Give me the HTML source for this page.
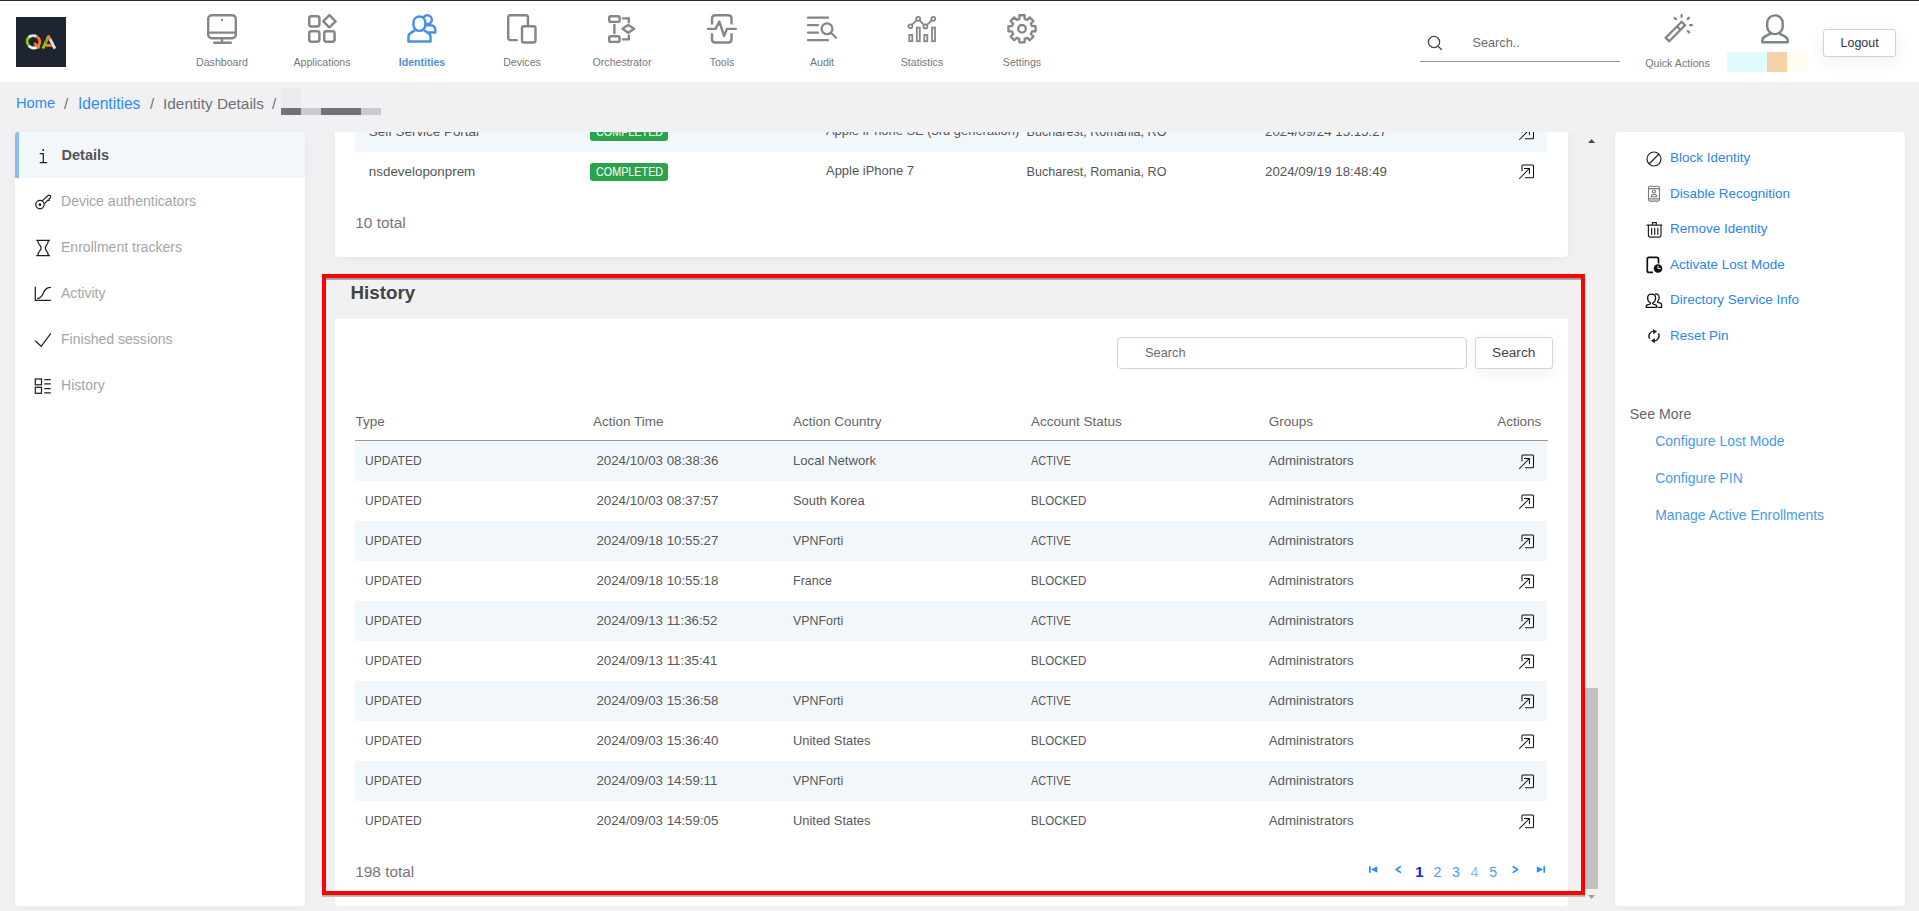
<!DOCTYPE html>
<html><head><meta charset="utf-8"><style>*{box-sizing:border-box;margin:0;padding:0}
html,body{width:1919px;height:911px;overflow:hidden;background:#f1f1f3;font-family:"Liberation Sans",sans-serif;position:relative}
.a{position:absolute}
svg.a{overflow:visible}
.t{position:absolute;line-height:1;white-space:nowrap}
</style></head><body>
<div class="a" style="left:0px;top:0px;width:1919px;height:82px;background:#fff"></div>
<div class="a" style="left:0px;top:0px;width:1919px;height:1px;background:#2a2a2a"></div>
<div class="a" style="left:16px;top:17px;width:50px;height:50px;background:#1f2530"></div>
<svg class="a" style="left:16px;top:17px;" width="50" height="50" viewBox="0 0 50 50"><g fill="none" stroke-width="2.9"><path d="M12.6,20.5 A6,6 0 0 1 16,18.8" stroke="#e6e6e6"/><path d="M16,18.8 A6,6 0 0 1 20.5,19.5" stroke="#e6e6e6"/><path d="M20.5,19.5 A6,6 0 0 1 22.8,28.2" stroke="#f07c28"/><path d="M22.8,28.2 A6,6 0 0 1 12.8,28.5" stroke="#f4f4f4"/><path d="M12.8,28.5 A6,6 0 0 1 12.6,20.5" stroke="#86cc14"/><path d="M18.2,26 L23.4,31.2" stroke="#f07c28"/><path d="M26.9,31.5 L29.8,25.4" stroke="#86cc14"/><path d="M29.8,25.4 L31.4,22" stroke="#7aa820"/><path d="M31.4,22 L32.6,19.5" stroke="#e6e6e6"/><path d="M31.2,22 L32.6,19.4 L34.4,22.5" stroke="#f07c28" stroke-linejoin="round"/><path d="M34.2,22.4 L38.9,31.6" stroke="#e6e6e6"/><path d="M30,28.4 H36" stroke="#f07c28"/></g></svg>
<svg class="a" style="left:207px;top:14px;overflow:visible" width="30" height="30" viewBox="0 0 30 30"><g fill="none" stroke="#868686" stroke-width="2.4" stroke-linecap="round"><rect x="1.2" y="1.2" width="27.6" height="23" rx="3.5"/><path d="M1.5,18.6 H28.5"/><path d="M15,24.5 V28.5"/><path d="M7.2,28.7 H23.8"/></g><circle cx="15" cy="6" r="1.2" fill="#868686"/></svg>
<div class="t" style="left:122px;width:200px;text-align:center;top:57.43px;font-size:10.6px;color:#777;font-weight:normal;">Dashboard</div>
<svg class="a" style="left:307px;top:14px;overflow:visible" width="30" height="30" viewBox="0 0 30 30"><g fill="none" stroke="#868686" stroke-width="2.5"><rect x="2.2" y="2.2" width="10.2" height="10.3" rx="2.2"/><rect x="2.2" y="17.2" width="10.2" height="10.5" rx="2.2"/><rect x="17.2" y="17.2" width="10.4" height="10.5" rx="2.2"/><path d="M22.4,1.2 L28.6,7.3 L22.4,13.4 L16.2,7.3Z" stroke-linejoin="round"/></g></svg>
<div class="t" style="left:222px;width:200px;text-align:center;top:57.43px;font-size:10.6px;color:#777;font-weight:normal;">Applications</div>
<svg class="a" style="left:407px;top:14px;overflow:visible" width="30" height="30" viewBox="0 0 30 30"><g stroke="#4a90e2" stroke-width="2.45" stroke-linejoin="round"><circle cx="20.3" cy="5.75" r="4.5" fill="none"/><path d="M18.5,11.3 H23.2 Q28.35,11.6 28.35,16.2 V18.5 H21" fill="none"/><path d="M8,16.4 L4.6,18.4 Q1.45,20.2 1.45,23 V27.45 H23.55 V23 Q23.55,20.2 20.4,18.4 L17,16.4" fill="#fff"/><rect x="6.45" y="2.45" width="11.9" height="14.4" rx="5.95" ry="6.2" fill="#fff"/></g></svg>
<div class="t" style="left:322px;width:200px;text-align:center;top:57.43px;font-size:10.6px;color:#4a90e2;font-weight:bold;">Identities</div>
<svg class="a" style="left:507px;top:14px;overflow:visible" width="30" height="30" viewBox="0 0 30 30"><g fill="none" stroke="#80878b" stroke-width="2.4" stroke-linecap="round"><path d="M9.8,26.1 H3.5 Q1.2,26.1 1.2,23.8 V3.5 Q1.2,1.2 3.5,1.2 H18.7 Q21,1.2 21,3.5 V11"/><rect x="15" y="12.2" width="13.5" height="16.3" rx="2"/></g></svg>
<div class="t" style="left:422px;width:200px;text-align:center;top:57.43px;font-size:10.6px;color:#777;font-weight:normal;">Devices</div>
<svg class="a" style="left:607px;top:14px;overflow:visible" width="30" height="30" viewBox="0 0 30 30"><g fill="none" stroke="#868686" stroke-width="2.4" stroke-linecap="round"><rect x="2.2" y="2.2" width="10.4" height="5.7" rx="1.6"/><rect x="2.2" y="22.2" width="10.4" height="5.7" rx="1.6"/><path d="M7.4,11 V19"/><path d="M21.3,10.9 L27.2,14.8 L21.3,18.7 L15.4,14.8Z" stroke-linejoin="round"/><path d="M16,4.4 H21.8 V8.2"/><path d="M21.8,21.6 V25.4 H16"/></g></svg>
<div class="t" style="left:522px;width:200px;text-align:center;top:57.43px;font-size:10.6px;color:#777;font-weight:normal;">Orchestrator</div>
<svg class="a" style="left:707px;top:14px;overflow:visible" width="30" height="30" viewBox="0 0 30 30"><g fill="none" stroke="#868686" stroke-width="2.4"><path d="M5,10.5 V4.5 Q5,1.2 8.3,1.2 H21.2 Q24.5,1.2 24.5,4.5 V10.5"/><path d="M5,19.3 V25.2 Q5,28.5 8.3,28.5 H21.2 Q24.5,28.5 24.5,25.2 V19.3"/><path d="M0,14.9 H8.6 L12.3,7.6 L17.1,21.8 L20,14.9 H29.8" stroke-linejoin="round"/></g></svg>
<div class="t" style="left:622px;width:200px;text-align:center;top:57.43px;font-size:10.6px;color:#777;font-weight:normal;">Tools</div>
<svg class="a" style="left:807px;top:14px;overflow:visible" width="30" height="30" viewBox="0 0 30 30"><g fill="none" stroke="#868686" stroke-width="2.3" stroke-linecap="round"><path d="M1,3.7 H21 M1,11.2 H11 M1,18.7 H11 M1,26.2 H21"/><circle cx="20" cy="14.8" r="5.4"/><path d="M24.4,19.2 L29,23.8"/></g></svg>
<div class="t" style="left:722px;width:200px;text-align:center;top:57.43px;font-size:10.6px;color:#777;font-weight:normal;">Audit</div>
<svg class="a" style="left:907px;top:14px;overflow:visible" width="30" height="30" viewBox="0 0 30 30"><g fill="none" stroke="#868686" stroke-width="1.8"><rect x="2.3" y="21" width="3" height="6.2"/><rect x="9.8" y="13.6" width="3" height="13.6"/><rect x="17.3" y="21" width="3" height="6.2"/><rect x="25" y="13.6" width="3" height="13.6"/><path d="M4.7,10.9 L9.9,6.1 M12.5,6.1 L17.1,11.1 M19.7,11.1 L24.9,6.1"/><circle cx="3.4" cy="12.3" r="2"/><circle cx="11.2" cy="4.8" r="2"/><circle cx="18.4" cy="12.5" r="2"/><circle cx="26.3" cy="4.8" r="2"/></g></svg>
<div class="t" style="left:822px;width:200px;text-align:center;top:57.43px;font-size:10.6px;color:#777;font-weight:normal;">Statistics</div>
<svg class="a" style="left:1007px;top:14px;overflow:visible" width="30" height="30" viewBox="0 0 30 30"><g fill="none" stroke="#868686" stroke-width="2.3" stroke-linejoin="round"><path d="M12.40,4.83 L12.40,1.25 L17.60,1.25 L17.60,4.83 L20.21,5.91 L22.74,3.38 L26.42,7.06 L23.89,9.59 L24.97,12.20 L28.55,12.20 L28.55,17.40 L24.97,17.40 L23.89,20.01 L26.42,22.54 L22.74,26.22 L20.21,23.69 L17.60,24.77 L17.60,28.35 L12.40,28.35 L12.40,24.77 L9.79,23.69 L7.26,26.22 L3.58,22.54 L6.11,20.01 L5.03,17.40 L1.45,17.40 L1.45,12.20 L5.03,12.20 L6.11,9.59 L3.58,7.06 L7.26,3.38 L9.79,5.91Z"/><circle cx="15" cy="14.8" r="3.8"/></g></svg>
<div class="t" style="left:922px;width:200px;text-align:center;top:57.43px;font-size:10.6px;color:#777;font-weight:normal;">Settings</div>
<svg class="a" style="left:1420px;top:30px;" width="30" height="30" viewBox="0 0 30 30"><g fill="none" stroke="#444" stroke-width="1.3"><circle cx="14" cy="12" r="5.6"/><path d="M18,16.2 L21.8,19.8"/></g></svg>
<div class="t" style="left:1472.5px;top:37.25px;font-size:12.7px;color:#6d6d6d;font-weight:normal;">Search..</div>
<div class="a" style="left:1420px;top:61px;width:200px;height:1.3px;background:#8d9c9c"></div>
<svg class="a" style="left:1660px;top:10px;" width="40" height="40" viewBox="0 0 40 40"><g fill="none" stroke="#7d8387" stroke-width="2.2" stroke-linecap="round"><path d="M5.77,27.83 L9.28,31.16 L25.03,15.32 L21.62,11.84 Z" stroke-linecap="butt" stroke-linejoin="miter"/><path d="M17.2,16.6 L20.8,20" stroke-linecap="butt"/><path d="M21.6,5.2 V6.8 M14.7,8.1 L15.9,9.1 M28.9,7.8 L27.8,8.9 M30.1,15.1 H31.9 M27.8,21.1 L29.2,22.3" stroke-width="2.3"/></g></svg>
<div class="t" style="left:1577.5px;width:200px;text-align:center;top:57.74px;font-size:10.7px;color:#777;font-weight:normal;">Quick Actions</div>
<svg class="a" style="left:1760px;top:13px;" width="30" height="32" viewBox="0 0 30 32"><g fill="none" stroke="#7c8488" stroke-width="2.4" stroke-linejoin="round"><rect x="7.2" y="2.4" width="15.5" height="18.7" rx="7.75" ry="7.4"/><path d="M10.6,20.6 L5.2,23.4 C3.2,24.6 2.3,25.8 2.3,27.6 V29.2 H27.7 V27.6 C27.7,25.8 26.8,24.6 24.8,23.4 L19.4,20.6"/></g></svg>
<div class="a" style="left:1727px;top:52px;width:40px;height:20px;background:#e0fbfd"></div>
<div class="a" style="left:1767px;top:52px;width:20px;height:20px;background:#f2d2a6"></div>
<div class="a" style="left:1787px;top:52px;width:20px;height:20px;background:#fffdf1"></div>
<div class="a" style="left:1823px;top:29px;width:73px;height:28px;background:#fff;border:1px solid #d2d2d2;border-radius:3px;box-shadow:0 4px 18px rgba(0,0,0,0.07)"></div>
<div class="t" style="left:1840.5px;top:36.72px;font-size:12.5px;color:#333;font-weight:normal;">Logout</div>
<div class="t" style="left:16px;top:96.36px;font-size:14.7px;color:#2d8cf0;font-weight:normal;">Home</div>
<div class="t" style="left:64px;top:96.10px;font-size:15px;color:#6b7178;font-weight:normal;">/</div>
<div class="t" style="left:78px;top:95.59px;font-size:15.6px;color:#2d8cf0;font-weight:normal;">Identities</div>
<div class="t" style="left:150px;top:96.10px;font-size:15px;color:#6b7178;font-weight:normal;">/</div>
<div class="t" style="left:163px;top:95.76px;font-size:15.4px;color:#6b7178;font-weight:normal;">Identity Details</div>
<div class="t" style="left:272px;top:96.10px;font-size:15px;color:#6b7178;font-weight:normal;">/</div>
<div class="a" style="left:281px;top:88px;width:20px;height:20px;background:#ebebee"></div>
<div class="a" style="left:281px;top:108px;width:20px;height:7px;background:#6f747a"></div>
<div class="a" style="left:301px;top:108px;width:20px;height:7px;background:#c9cbce"></div>
<div class="a" style="left:321px;top:108px;width:40px;height:7px;background:#6f747a"></div>
<div class="a" style="left:361px;top:108px;width:20px;height:7px;background:#c9cbce"></div>
<div class="a" style="left:15px;top:132px;width:290px;height:774px;background:#fff;border-radius:3px;box-shadow:0 2px 12px rgba(0,0,0,0.045)"></div>
<div class="a" style="left:15px;top:132px;width:290px;height:46px;background:#f2f7fc"></div>
<div class="a" style="left:15px;top:132px;width:4px;height:46px;background:#8bbaee;border-radius:3px 0 0 0"></div>
<div class="t" style="left:61.5px;top:147.88px;font-size:14.55px;color:#555;font-weight:bold;">Details</div>
<div class="t" style="left:61px;top:194.31px;font-size:14.05px;color:#a5a5a5;font-weight:normal;">Device authenticators</div>
<div class="t" style="left:61px;top:240.31px;font-size:14.05px;color:#a5a5a5;font-weight:normal;">Enrollment trackers</div>
<div class="t" style="left:61px;top:286.31px;font-size:14.05px;color:#a5a5a5;font-weight:normal;">Activity</div>
<div class="t" style="left:61px;top:332.31px;font-size:14.05px;color:#a5a5a5;font-weight:normal;">Finished sessions</div>
<div class="t" style="left:61px;top:378.31px;font-size:14.05px;color:#a5a5a5;font-weight:normal;">History</div>
<svg class="a" style="left:0px;top:0px;" width="320" height="420" viewBox="0 0 320 420"><g fill="none" stroke="#222" stroke-width="1.25"><path d="M39.7,153.6 H43.3 V162.6 M39.7,162.6 H47.1"/><circle cx="40" cy="204.6" r="4.2"/><path d="M42.2,200.9 L47.8,195.7 Q49.3,194.7 50.4,195.7 Q51.2,196.8 50.2,197.9 L49.1,198.9 V200.3 H47.7 L44.4,203.6"/><path d="M36.2,240.4 H50 M36.2,255.5 H50"/><path d="M37.8,240.5 C37.8,244.5 41.2,245.5 41.2,248 C41.2,250.5 37.8,251.5 37.8,255.4 M48.4,240.5 C48.4,244.5 45.2,245.5 45.2,248 C45.2,250.5 48.4,251.5 48.4,255.4"/><path d="M35.3,286.8 V300.4 H50.9"/><path d="M37.2,298.6 C41.5,298.6 42.5,295 43.6,292.5 C44.8,289.5 46.5,287.4 50.9,287.4"/><path d="M35.2,340.8 L41.2,346.3 L50.8,333.3"/><rect x="35.3" y="379" width="6.2" height="5.8"/><rect x="35.3" y="387.3" width="6.2" height="6"/><path d="M44.2,379.6 H50.8 M44.2,383.8 H50.8 M44.2,388.6 H50.8 M44.2,392.8 H50.8"/></g><circle cx="43.2" cy="150" r="0.9" fill="#222"/><circle cx="39.9" cy="204.7" r="1.4" fill="#222"/></svg>
<div class="a" style="left:0;top:132px;width:1600px;height:779px;overflow:hidden">
<div class="a" style="left:0;top:-132px;width:1919px;height:1100px">
<div class="a" style="left:335px;top:90px;width:1233px;height:167px;background:#fff;border-radius:4px;box-shadow:0 2px 12px rgba(0,0,0,0.045)"></div>
<div class="a" style="left:355px;top:111px;width:1192px;height:41px;background:#f2f7fc"></div>
<div class="t" style="left:368.8px;top:124.86px;font-size:13.4px;color:#555;font-weight:normal;">Self Service Portal</div>
<div class="a" style="left:590px;top:122.8px;width:78px;height:18.3px;background:#2aa34a;border-radius:3px"></div>
<div class="t" style="left:595.5px;top:124.80px;font-size:13px;color:#fff;font-weight:normal;transform:scaleX(0.83);transform-origin:0 0">COMPLETED</div>
<div class="t" style="left:826px;top:125.25px;font-size:12.93px;color:#555;font-weight:normal;">Apple iPhone SE (3rd generation)</div>
<div class="t" style="left:1026.5px;top:125.53px;font-size:12.6px;color:#555;font-weight:normal;">Bucharest, Romania, RO</div>
<div class="t" style="left:1265px;top:124.94px;font-size:13.3px;color:#555;font-weight:normal;">2024/09/24 15:15:27</div>
<svg class="a" style="left:1515.5px;top:122.5px;" width="20" height="20" viewBox="0 0 20 20"><g fill="none" stroke="#111" stroke-width="1.05" stroke-linecap="round"><path d="M6,9 V3.9 Q6,2.9 7,2.9 H16.5 Q17.5,2.9 17.5,3.9 V14.8 Q17.5,15.8 16.5,15.8 H9.3"/><path d="M3.6,16.5 L13.3,6.5 M8.5,6.4 H13.4 V11.6"/></g></svg>
<div class="t" style="left:368.8px;top:164.86px;font-size:13.4px;color:#555;font-weight:normal;">nsdeveloponprem</div>
<div class="a" style="left:590px;top:162.8px;width:78px;height:18.5px;background:#2aa34a;border-radius:3px"></div>
<div class="t" style="left:595.5px;top:164.80px;font-size:13px;color:#fff;font-weight:normal;transform:scaleX(0.83);transform-origin:0 0">COMPLETED</div>
<div class="t" style="left:826px;top:165.22px;font-size:12.97px;color:#555;font-weight:normal;">Apple iPhone 7</div>
<div class="t" style="left:1026.5px;top:165.53px;font-size:12.6px;color:#555;font-weight:normal;">Bucharest, Romania, RO</div>
<div class="t" style="left:1265px;top:164.94px;font-size:13.3px;color:#555;font-weight:normal;">2024/09/19 18:48:49</div>
<svg class="a" style="left:1515.5px;top:162.4px;" width="20" height="20" viewBox="0 0 20 20"><g fill="none" stroke="#111" stroke-width="1.05" stroke-linecap="round"><path d="M6,9 V3.9 Q6,2.9 7,2.9 H16.5 Q17.5,2.9 17.5,3.9 V14.8 Q17.5,15.8 16.5,15.8 H9.3"/><path d="M3.6,16.5 L13.3,6.5 M8.5,6.4 H13.4 V11.6"/></g></svg>
<div class="t" style="left:355.3px;top:214.86px;font-size:15.4px;color:#777;font-weight:normal;">10 total</div>
<div class="t" style="left:350.5px;top:284.09px;font-size:18.8px;color:#444;font-weight:bold;">History</div>
<div class="a" style="left:335px;top:319px;width:1233px;height:587px;background:#fff;border-radius:0 0 4px 4px"></div>
<div class="a" style="left:1117px;top:336.5px;width:350px;height:32.5px;background:#fff;border:1px solid #cfd3d8;border-radius:4px"></div>
<div class="t" style="left:1145px;top:347.46px;font-size:12.8px;color:#6b6b6b;font-weight:normal;">Search</div>
<div class="a" style="left:1475px;top:336.5px;width:78px;height:32.5px;background:#fff;border:1px solid #d6d6d6;border-radius:3px;box-shadow:0 4px 16px rgba(0,0,0,0.06)"></div>
<div class="t" style="left:1492px;top:345.60px;font-size:13.7px;color:#444;font-weight:normal;">Search</div>
<div class="t" style="left:355.4px;top:414.77px;font-size:13.5px;color:#666;font-weight:normal;">Type</div>
<div class="t" style="left:592.9px;top:414.77px;font-size:13.5px;color:#666;font-weight:normal;">Action Time</div>
<div class="t" style="left:793px;top:414.77px;font-size:13.5px;color:#666;font-weight:normal;">Action Country</div>
<div class="t" style="left:1031px;top:414.77px;font-size:13.5px;color:#666;font-weight:normal;">Account Status</div>
<div class="t" style="left:1268.7px;top:414.77px;font-size:13.5px;color:#666;font-weight:normal;">Groups</div>
<div class="t" style="right:377.79999999999995px;top:414.86px;font-size:13.4px;color:#666;font-weight:normal;">Actions</div>
<div class="a" style="left:355px;top:440px;width:1193px;height:1.3px;background:#9c9c9c"></div>
<div class="a" style="left:355px;top:441px;width:1192px;height:40px;background:#f2f7fc"></div>
<div class="t" style="left:365.4px;top:454.04px;font-size:13.3px;color:#585858;font-weight:normal;transform:scaleX(0.905);transform-origin:0 0">UPDATED</div>
<div class="t" style="left:596.4px;top:454.04px;font-size:13.3px;color:#585858;font-weight:normal;">2024/10/03 08:38:36</div>
<div class="t" style="left:793px;top:454.18px;font-size:13.14px;color:#585858;font-weight:normal;">Local Network</div>
<div class="t" style="left:1031.3px;top:454.04px;font-size:13.3px;color:#585858;font-weight:normal;transform:scaleX(0.83);transform-origin:0 0">ACTIVE</div>
<div class="t" style="left:1268.7px;top:454.04px;font-size:13.3px;color:#585858;font-weight:normal;">Administrators</div>
<svg class="a" style="left:1515.5px;top:452.4px;" width="20" height="20" viewBox="0 0 20 20"><g fill="none" stroke="#111" stroke-width="1.05" stroke-linecap="round"><path d="M6,9 V3.9 Q6,2.9 7,2.9 H16.5 Q17.5,2.9 17.5,3.9 V14.8 Q17.5,15.8 16.5,15.8 H9.3"/><path d="M3.6,16.5 L13.3,6.5 M8.5,6.4 H13.4 V11.6"/></g></svg>
<div class="t" style="left:365.4px;top:494.04px;font-size:13.3px;color:#585858;font-weight:normal;transform:scaleX(0.905);transform-origin:0 0">UPDATED</div>
<div class="t" style="left:596.4px;top:494.04px;font-size:13.3px;color:#585858;font-weight:normal;">2024/10/03 08:37:57</div>
<div class="t" style="left:793px;top:495.20px;font-size:12.88px;color:#585858;font-weight:normal;">South Korea</div>
<div class="t" style="left:1031.3px;top:494.04px;font-size:13.3px;color:#585858;font-weight:normal;transform:scaleX(0.87);transform-origin:0 0">BLOCKED</div>
<div class="t" style="left:1268.7px;top:494.04px;font-size:13.3px;color:#585858;font-weight:normal;">Administrators</div>
<svg class="a" style="left:1515.5px;top:492.4px;" width="20" height="20" viewBox="0 0 20 20"><g fill="none" stroke="#111" stroke-width="1.05" stroke-linecap="round"><path d="M6,9 V3.9 Q6,2.9 7,2.9 H16.5 Q17.5,2.9 17.5,3.9 V14.8 Q17.5,15.8 16.5,15.8 H9.3"/><path d="M3.6,16.5 L13.3,6.5 M8.5,6.4 H13.4 V11.6"/></g></svg>
<div class="a" style="left:355px;top:521px;width:1192px;height:40px;background:#f2f7fc"></div>
<div class="t" style="left:365.4px;top:534.04px;font-size:13.3px;color:#585858;font-weight:normal;transform:scaleX(0.905);transform-origin:0 0">UPDATED</div>
<div class="t" style="left:596.4px;top:534.04px;font-size:13.3px;color:#585858;font-weight:normal;">2024/09/18 10:55:27</div>
<div class="t" style="left:793px;top:534.80px;font-size:12.4px;color:#585858;font-weight:normal;">VPNForti</div>
<div class="t" style="left:1031.3px;top:534.04px;font-size:13.3px;color:#585858;font-weight:normal;transform:scaleX(0.83);transform-origin:0 0">ACTIVE</div>
<div class="t" style="left:1268.7px;top:534.04px;font-size:13.3px;color:#585858;font-weight:normal;">Administrators</div>
<svg class="a" style="left:1515.5px;top:532.4px;" width="20" height="20" viewBox="0 0 20 20"><g fill="none" stroke="#111" stroke-width="1.05" stroke-linecap="round"><path d="M6,9 V3.9 Q6,2.9 7,2.9 H16.5 Q17.5,2.9 17.5,3.9 V14.8 Q17.5,15.8 16.5,15.8 H9.3"/><path d="M3.6,16.5 L13.3,6.5 M8.5,6.4 H13.4 V11.6"/></g></svg>
<div class="t" style="left:365.4px;top:574.04px;font-size:13.3px;color:#585858;font-weight:normal;transform:scaleX(0.905);transform-origin:0 0">UPDATED</div>
<div class="t" style="left:596.4px;top:574.04px;font-size:13.3px;color:#585858;font-weight:normal;">2024/09/18 10:55:18</div>
<div class="t" style="left:793px;top:574.72px;font-size:12.5px;color:#585858;font-weight:normal;">France</div>
<div class="t" style="left:1031.3px;top:574.04px;font-size:13.3px;color:#585858;font-weight:normal;transform:scaleX(0.87);transform-origin:0 0">BLOCKED</div>
<div class="t" style="left:1268.7px;top:574.04px;font-size:13.3px;color:#585858;font-weight:normal;">Administrators</div>
<svg class="a" style="left:1515.5px;top:572.4px;" width="20" height="20" viewBox="0 0 20 20"><g fill="none" stroke="#111" stroke-width="1.05" stroke-linecap="round"><path d="M6,9 V3.9 Q6,2.9 7,2.9 H16.5 Q17.5,2.9 17.5,3.9 V14.8 Q17.5,15.8 16.5,15.8 H9.3"/><path d="M3.6,16.5 L13.3,6.5 M8.5,6.4 H13.4 V11.6"/></g></svg>
<div class="a" style="left:355px;top:601px;width:1192px;height:40px;background:#f2f7fc"></div>
<div class="t" style="left:365.4px;top:614.04px;font-size:13.3px;color:#585858;font-weight:normal;transform:scaleX(0.905);transform-origin:0 0">UPDATED</div>
<div class="t" style="left:596.4px;top:614.04px;font-size:13.3px;color:#585858;font-weight:normal;">2024/09/13 11:36:52</div>
<div class="t" style="left:793px;top:614.80px;font-size:12.4px;color:#585858;font-weight:normal;">VPNForti</div>
<div class="t" style="left:1031.3px;top:614.04px;font-size:13.3px;color:#585858;font-weight:normal;transform:scaleX(0.83);transform-origin:0 0">ACTIVE</div>
<div class="t" style="left:1268.7px;top:614.04px;font-size:13.3px;color:#585858;font-weight:normal;">Administrators</div>
<svg class="a" style="left:1515.5px;top:612.4px;" width="20" height="20" viewBox="0 0 20 20"><g fill="none" stroke="#111" stroke-width="1.05" stroke-linecap="round"><path d="M6,9 V3.9 Q6,2.9 7,2.9 H16.5 Q17.5,2.9 17.5,3.9 V14.8 Q17.5,15.8 16.5,15.8 H9.3"/><path d="M3.6,16.5 L13.3,6.5 M8.5,6.4 H13.4 V11.6"/></g></svg>
<div class="t" style="left:365.4px;top:654.04px;font-size:13.3px;color:#585858;font-weight:normal;transform:scaleX(0.905);transform-origin:0 0">UPDATED</div>
<div class="t" style="left:596.4px;top:654.04px;font-size:13.3px;color:#585858;font-weight:normal;">2024/09/13 11:35:41</div>
<div class="t" style="left:793px;top:654.30px;font-size:13px;color:#585858;font-weight:normal;"></div>
<div class="t" style="left:1031.3px;top:654.04px;font-size:13.3px;color:#585858;font-weight:normal;transform:scaleX(0.87);transform-origin:0 0">BLOCKED</div>
<div class="t" style="left:1268.7px;top:654.04px;font-size:13.3px;color:#585858;font-weight:normal;">Administrators</div>
<svg class="a" style="left:1515.5px;top:652.4px;" width="20" height="20" viewBox="0 0 20 20"><g fill="none" stroke="#111" stroke-width="1.05" stroke-linecap="round"><path d="M6,9 V3.9 Q6,2.9 7,2.9 H16.5 Q17.5,2.9 17.5,3.9 V14.8 Q17.5,15.8 16.5,15.8 H9.3"/><path d="M3.6,16.5 L13.3,6.5 M8.5,6.4 H13.4 V11.6"/></g></svg>
<div class="a" style="left:355px;top:681px;width:1192px;height:40px;background:#f2f7fc"></div>
<div class="t" style="left:365.4px;top:694.04px;font-size:13.3px;color:#585858;font-weight:normal;transform:scaleX(0.905);transform-origin:0 0">UPDATED</div>
<div class="t" style="left:596.4px;top:694.04px;font-size:13.3px;color:#585858;font-weight:normal;">2024/09/03 15:36:58</div>
<div class="t" style="left:793px;top:694.80px;font-size:12.4px;color:#585858;font-weight:normal;">VPNForti</div>
<div class="t" style="left:1031.3px;top:694.04px;font-size:13.3px;color:#585858;font-weight:normal;transform:scaleX(0.83);transform-origin:0 0">ACTIVE</div>
<div class="t" style="left:1268.7px;top:694.04px;font-size:13.3px;color:#585858;font-weight:normal;">Administrators</div>
<svg class="a" style="left:1515.5px;top:692.4px;" width="20" height="20" viewBox="0 0 20 20"><g fill="none" stroke="#111" stroke-width="1.05" stroke-linecap="round"><path d="M6,9 V3.9 Q6,2.9 7,2.9 H16.5 Q17.5,2.9 17.5,3.9 V14.8 Q17.5,15.8 16.5,15.8 H9.3"/><path d="M3.6,16.5 L13.3,6.5 M8.5,6.4 H13.4 V11.6"/></g></svg>
<div class="t" style="left:365.4px;top:734.04px;font-size:13.3px;color:#585858;font-weight:normal;transform:scaleX(0.905);transform-origin:0 0">UPDATED</div>
<div class="t" style="left:596.4px;top:734.04px;font-size:13.3px;color:#585858;font-weight:normal;">2024/09/03 15:36:40</div>
<div class="t" style="left:793px;top:735.18px;font-size:12.9px;color:#585858;font-weight:normal;">United States</div>
<div class="t" style="left:1031.3px;top:734.04px;font-size:13.3px;color:#585858;font-weight:normal;transform:scaleX(0.87);transform-origin:0 0">BLOCKED</div>
<div class="t" style="left:1268.7px;top:734.04px;font-size:13.3px;color:#585858;font-weight:normal;">Administrators</div>
<svg class="a" style="left:1515.5px;top:732.4px;" width="20" height="20" viewBox="0 0 20 20"><g fill="none" stroke="#111" stroke-width="1.05" stroke-linecap="round"><path d="M6,9 V3.9 Q6,2.9 7,2.9 H16.5 Q17.5,2.9 17.5,3.9 V14.8 Q17.5,15.8 16.5,15.8 H9.3"/><path d="M3.6,16.5 L13.3,6.5 M8.5,6.4 H13.4 V11.6"/></g></svg>
<div class="a" style="left:355px;top:761px;width:1192px;height:40px;background:#f2f7fc"></div>
<div class="t" style="left:365.4px;top:774.04px;font-size:13.3px;color:#585858;font-weight:normal;transform:scaleX(0.905);transform-origin:0 0">UPDATED</div>
<div class="t" style="left:596.4px;top:774.04px;font-size:13.3px;color:#585858;font-weight:normal;">2024/09/03 14:59:11</div>
<div class="t" style="left:793px;top:774.80px;font-size:12.4px;color:#585858;font-weight:normal;">VPNForti</div>
<div class="t" style="left:1031.3px;top:774.04px;font-size:13.3px;color:#585858;font-weight:normal;transform:scaleX(0.83);transform-origin:0 0">ACTIVE</div>
<div class="t" style="left:1268.7px;top:774.04px;font-size:13.3px;color:#585858;font-weight:normal;">Administrators</div>
<svg class="a" style="left:1515.5px;top:772.4px;" width="20" height="20" viewBox="0 0 20 20"><g fill="none" stroke="#111" stroke-width="1.05" stroke-linecap="round"><path d="M6,9 V3.9 Q6,2.9 7,2.9 H16.5 Q17.5,2.9 17.5,3.9 V14.8 Q17.5,15.8 16.5,15.8 H9.3"/><path d="M3.6,16.5 L13.3,6.5 M8.5,6.4 H13.4 V11.6"/></g></svg>
<div class="t" style="left:365.4px;top:814.04px;font-size:13.3px;color:#585858;font-weight:normal;transform:scaleX(0.905);transform-origin:0 0">UPDATED</div>
<div class="t" style="left:596.4px;top:814.04px;font-size:13.3px;color:#585858;font-weight:normal;">2024/09/03 14:59:05</div>
<div class="t" style="left:793px;top:815.18px;font-size:12.9px;color:#585858;font-weight:normal;">United States</div>
<div class="t" style="left:1031.3px;top:814.04px;font-size:13.3px;color:#585858;font-weight:normal;transform:scaleX(0.87);transform-origin:0 0">BLOCKED</div>
<div class="t" style="left:1268.7px;top:814.04px;font-size:13.3px;color:#585858;font-weight:normal;">Administrators</div>
<svg class="a" style="left:1515.5px;top:812.4px;" width="20" height="20" viewBox="0 0 20 20"><g fill="none" stroke="#111" stroke-width="1.05" stroke-linecap="round"><path d="M6,9 V3.9 Q6,2.9 7,2.9 H16.5 Q17.5,2.9 17.5,3.9 V14.8 Q17.5,15.8 16.5,15.8 H9.3"/><path d="M3.6,16.5 L13.3,6.5 M8.5,6.4 H13.4 V11.6"/></g></svg>
<div class="t" style="left:355.2px;top:864.46px;font-size:15.4px;color:#777;font-weight:normal;">198 total</div>
<svg class="a" style="left:1360px;top:860px;" width="200" height="20" viewBox="0 0 200 20"><g fill="#2f8cf4"><rect x="9" y="6.2" width="1.7" height="6.6"/><path d="M10.8,9.5 L17.3,6.2 V12.8Z"/><path d="M176.8,6.2 V12.8 L183.2,9.5Z"/><rect x="183.4" y="6.2" width="1.7" height="6.6"/></g><g fill="none" stroke="#2f8cf4" stroke-width="1.6" stroke-linecap="round" stroke-linejoin="round"><path d="M40.5,6.6 L36.1,9.5 L40.5,12.4"/><path d="M153.2,6.6 L157.6,9.5 L153.2,12.4"/></g></svg>
<div class="t" style="left:1415.2px;top:864.10px;font-size:15px;color:#2121d6;font-weight:bold;">1</div>
<div class="t" style="left:1433.6px;top:864.78px;font-size:14.2px;color:#4b9bf2;font-weight:normal;">2</div>
<div class="t" style="left:1452px;top:864.78px;font-size:14.2px;color:#4b9bf2;font-weight:normal;">3</div>
<div class="t" style="left:1470.4px;top:864.78px;font-size:14.2px;color:#86bdf6;font-weight:normal;">4</div>
<div class="t" style="left:1489.3px;top:864.78px;font-size:14.2px;color:#4b9bf2;font-weight:normal;">5</div>
</div>
</div>
<div class="a" style="left:326px;top:278px;width:1255px;height:2px;background:linear-gradient(#8a9999,#a9b3b3)"></div>
<div class="a" style="left:322px;top:895px;width:1263px;height:2px;background:linear-gradient(#93a0a0,#c8cccc)"></div>
<div class="a" style="left:322px;top:274px;width:1263px;height:621px;border:4px solid #ff0000"></div>
<div class="a" style="left:1585px;top:132px;width:13px;height:774px;background:#f1f1f1"></div>
<div class="a" style="left:1585px;top:688px;width:13px;height:201px;background:#c1c1c1"></div>
<svg class="a" style="left:1585px;top:132px;" width="13" height="774" viewBox="0 0 13 774"><path d="M3,11 L6.6,7 L10.2,11Z" fill="#505050"/><path d="M3,763 L10,763 L6.5,767Z" fill="#a0a0a0"/></svg>
<div class="a" style="left:1615px;top:132px;width:290px;height:774px;background:#fff;border-radius:4px;box-shadow:0 2px 12px rgba(0,0,0,0.045)"></div>
<div class="t" style="left:1670px;top:151.27px;font-size:13.5px;color:#2a86e6;font-weight:normal;">Block Identity</div>
<div class="t" style="left:1670px;top:187.17px;font-size:13.5px;color:#2a86e6;font-weight:normal;">Disable Recognition</div>
<div class="t" style="left:1670px;top:222.47px;font-size:13.5px;color:#2a86e6;font-weight:normal;">Remove Identity</div>
<div class="t" style="left:1670px;top:257.87px;font-size:13.5px;color:#2a86e6;font-weight:normal;">Activate Lost Mode</div>
<div class="t" style="left:1670px;top:293.37px;font-size:13.5px;color:#2a86e6;font-weight:normal;">Directory Service Info</div>
<div class="t" style="left:1670px;top:329.37px;font-size:13.5px;color:#2a86e6;font-weight:normal;">Reset Pin</div>
<div class="t" style="left:1629.8px;top:406.88px;font-size:14.2px;color:#666;font-weight:normal;">See More</div>
<div class="t" style="left:1655.2px;top:434.79px;font-size:13.95px;color:#4a9be8;font-weight:normal;">Configure Lost Mode</div>
<div class="t" style="left:1655.2px;top:471.69px;font-size:13.95px;color:#4a9be8;font-weight:normal;">Configure PIN</div>
<div class="t" style="left:1655.2px;top:508.59px;font-size:13.95px;color:#4a9be8;font-weight:normal;">Manage Active Enrollments</div>
<svg class="a" style="left:0px;top:0px;" width="1919" height="911" viewBox="0 0 1919 911"><g fill="none" stroke="#222" stroke-width="1.2"><circle cx="1654" cy="159" r="7"/><path d="M1649,164 L1659,154"/></g><g fill="none" stroke="#7a7a7a" stroke-width="1.1"><rect x="1648.5" y="186.3" width="11" height="14.8" rx="1.6"/><path d="M1648.8,188.6 H1659.2 M1648.8,198.9 H1659.2"/><circle cx="1654" cy="191.5" r="1.5"/><path d="M1651.3,196.8 Q1651.3,194.2 1654,194.2 Q1656.7,194.2 1656.7,196.8Z"/></g><g fill="none" stroke="#222" stroke-width="1.2" stroke-linecap="round"><path d="M1647,225.2 H1661.8 M1652.5,225 V222.6 H1656.3 V225"/><path d="M1648.4,225.4 V235 Q1648.4,237.2 1650.6,237.2 H1658.8 Q1661,237.2 1661,235 V225.4"/><path d="M1651.6,228.3 V234.3 M1654.7,228.3 V234.3 M1657.8,228.3 V234.3"/></g><g fill="none" stroke="#111" stroke-width="1.7"><path d="M1653,272.4 H1649 Q1647.3,272.4 1647.3,270.7 V259.1 Q1647.3,257.4 1649,257.4 H1656.8 Q1658.5,257.4 1658.5,259.1 V263.5"/></g><circle cx="1658" cy="268.5" r="4.3" fill="#111"/><path d="M1658,265.8 V268.6 H1660.5" fill="none" stroke="#fff" stroke-width="1"/><g fill="none" stroke="#111" stroke-width="1.25" stroke-linejoin="round"><path d="M1650.6,303 C1648.2,301.8 1647.6,300 1647.6,298 C1647.6,295.5 1649.3,294 1651.6,294 C1653.9,294 1655.6,295.5 1655.6,298 C1655.6,300 1655,301.8 1652.6,303 L1653,304 L1655.6,304.8 Q1656.8,305.3 1656.8,306.3 V307.4 H1646.2 V306.3 Q1646.2,305.3 1647.4,304.8 L1650.2,304 Z"/><path d="M1654.8,294.2 C1657,293.4 1659.2,294.8 1659.2,297.6 C1659.2,299.4 1658.6,300.6 1657.6,301.6 L1657.8,302.4 L1660.4,303.2 Q1661.6,303.7 1661.6,304.8 V307.4 H1658.2"/></g><g fill="none" stroke="#222" stroke-width="1.4"><path d="M1654.6,331.2 A5,5 0 0 0 1649.6,338.6"/><path d="M1653.4,340.8 A5,5 0 0 0 1658.4,333.4"/></g><path d="M1653.2,328.9 L1657,331.6 L1653.2,334.3Z M1654.8,338.1 L1651,340.8 L1654.8,343.5Z" fill="#222"/></svg>
</body></html>
